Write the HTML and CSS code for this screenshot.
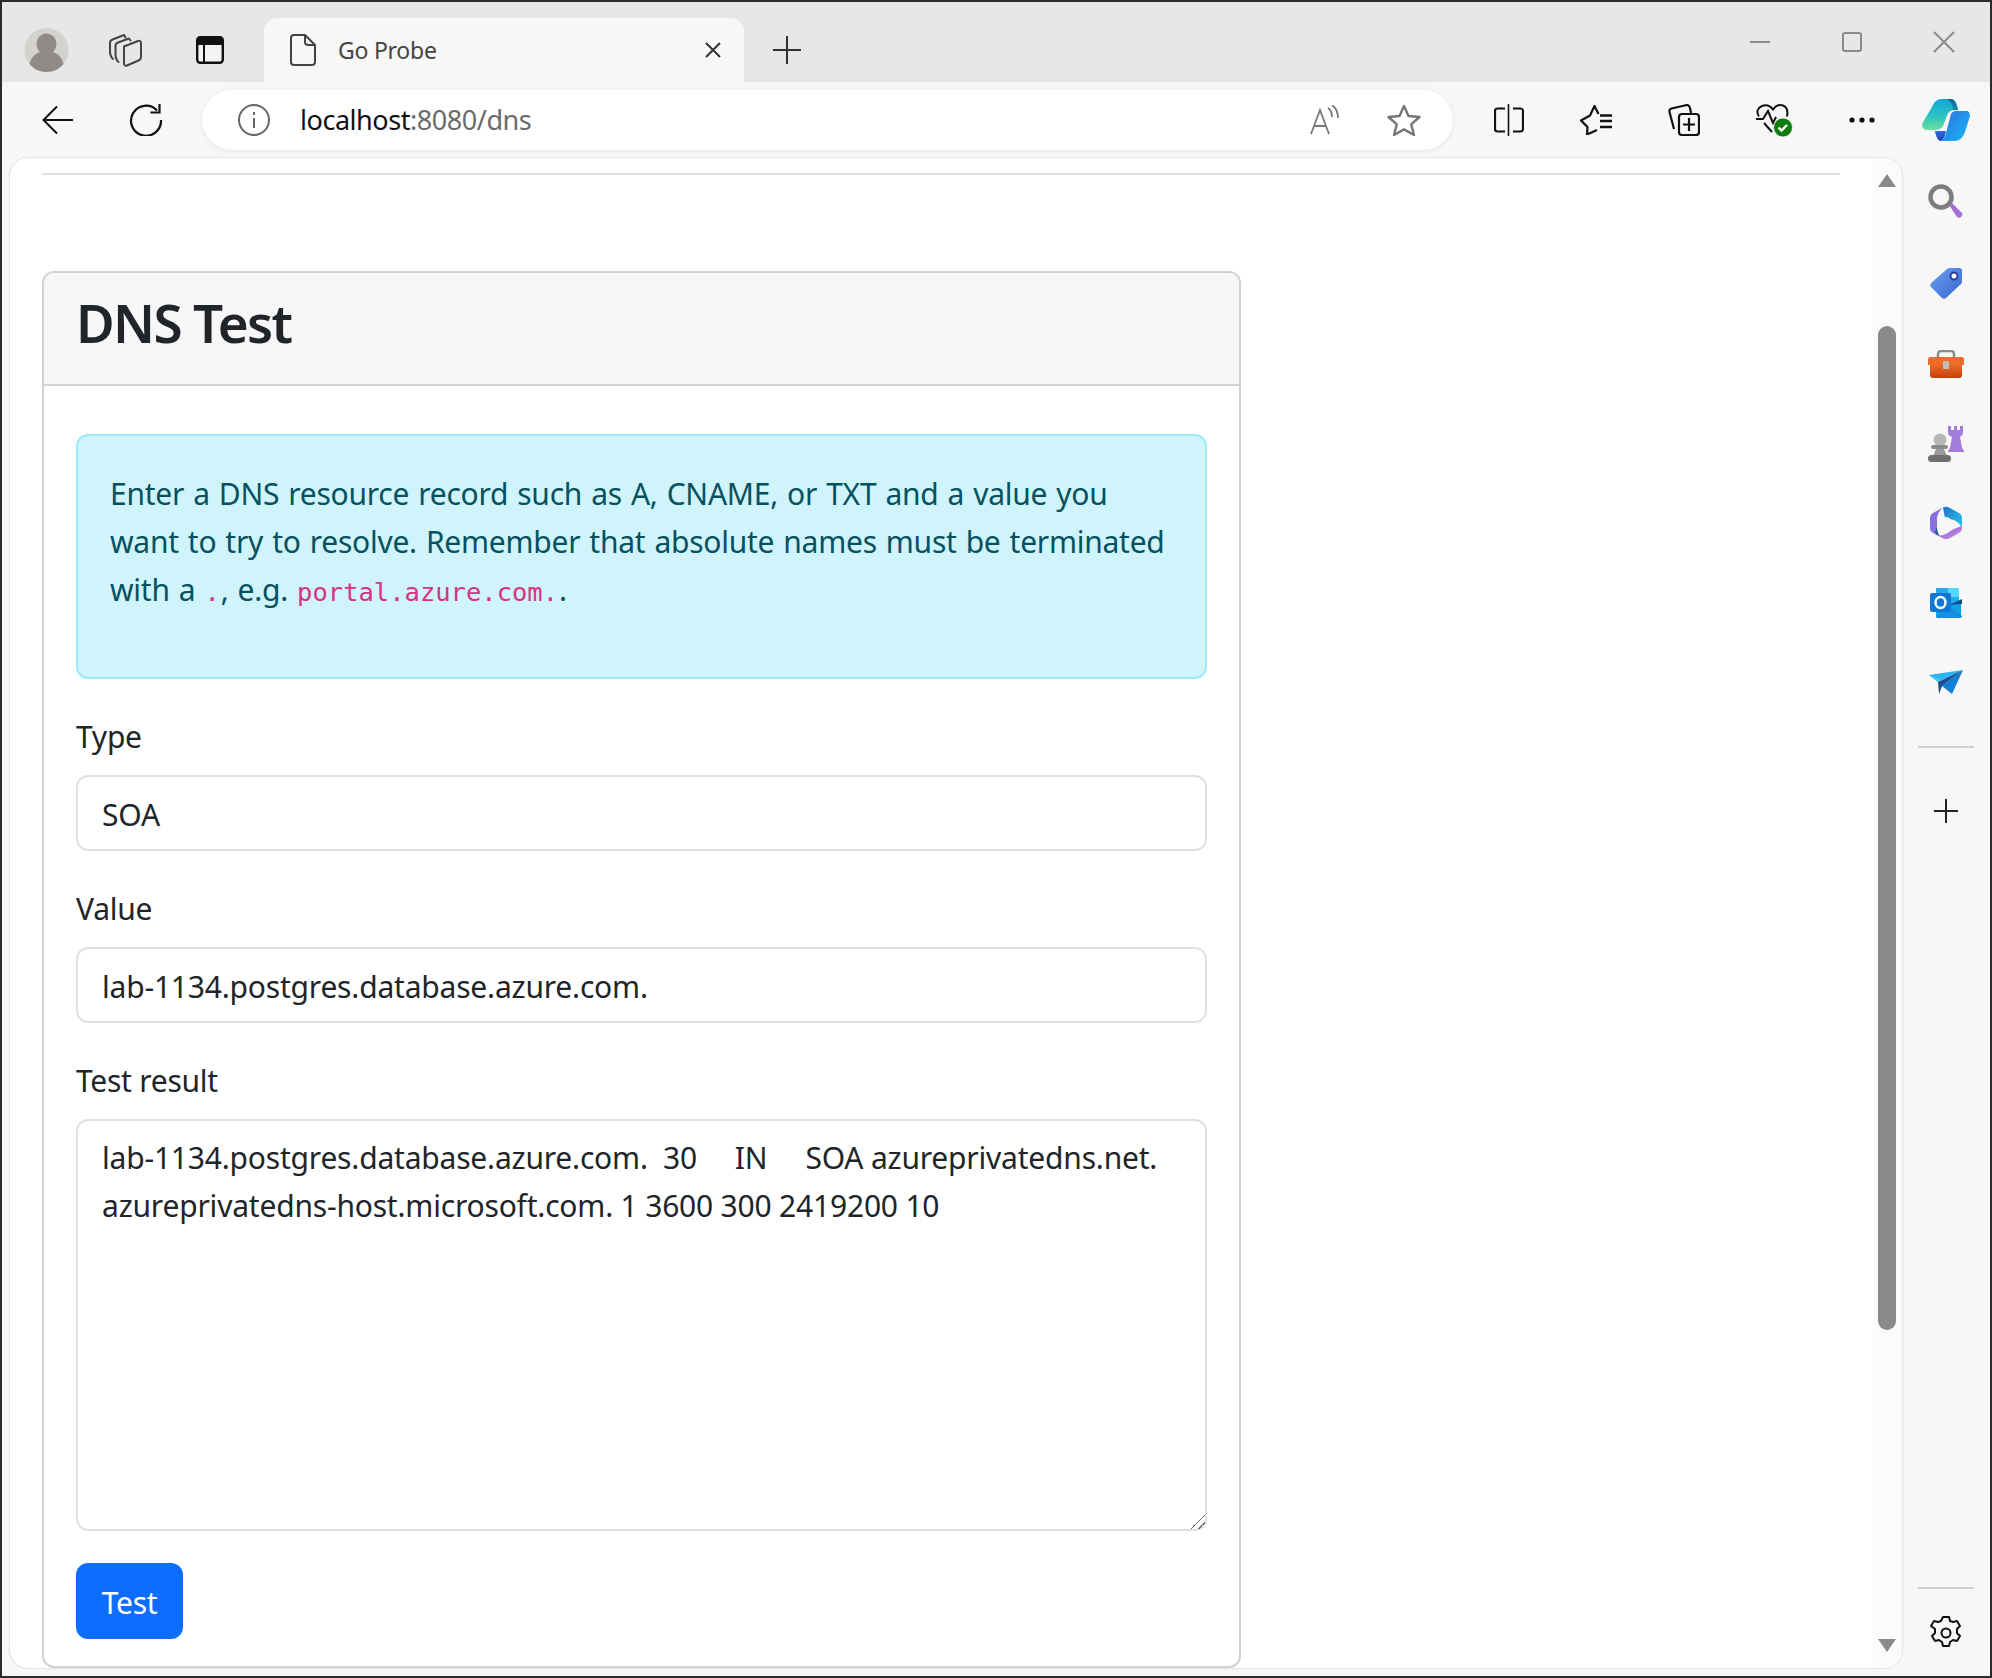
FILE: index.html
```html
<!DOCTYPE html>
<html lang="en">
<head>
<meta charset="utf-8">
<title>Go Probe</title>
<link rel="stylesheet" href="styles.css">
</head>
<body>
<div class="window">
  <header class="tabstrip">
    <span class="strip-btn avatar-btn">
      <svg width="45" height="46" viewBox="0 0 44 46"><circle cx="22" cy="23" r="22" fill="#d3d2ce"/><ellipse cx="22" cy="17" rx="10" ry="10.5" fill="#8f8b86"/><path d="M5 37c2-9 9-13 17-13s15 4 17 13c-4 5-10 8-17 8S9 42 5 37z" fill="#8f8b86"/></svg>
    </span>
    <span class="strip-btn workspaces-btn">
      <svg width="33" height="33" viewBox="0 0 33 33" fill="none" stroke="#444" stroke-width="2" stroke-linejoin="round" stroke-linecap="round"><path d="M4 25C1.500 23 1 21 1 17V9c0-2 1-3 2.500-3.500L15 1l1.500 2.500"/><path d="M9.500 28C7 26 6.500 24 6.500 20v-8c0-2 1-3 2.500-3.500L20 4.500l1.500 2"/><path d="M15 12.500 29 7c2-.5 3 .5 3 2v14c0 2-1 3-2.500 3.500L18 31.500c-2 .5-3-.5-3-2z"/></svg>
    </span>
    <span class="strip-btn tabs-btn">
      <svg width="28" height="28" viewBox="0 0 28 28"><rect x="1.200" y="1.200" width="25.600" height="25.600" rx="3" fill="#f4f4f4" stroke="#111" stroke-width="2.400"/><path d="M1 4a3 3 0 0 1 3-3h20a3 3 0 0 1 3 3v5H1z" fill="#111"/><path d="M8 9v18" stroke="#111" stroke-width="2"/></svg>
    </span>
    <div class="tab">
      <svg class="tab-icon" width="26" height="32" viewBox="0 0 26 32" fill="none" stroke="#444" stroke-width="2" stroke-linejoin="round"><path d="M4 1h11l10 10v17c0 2-1 3-3 3H4c-2 0-3-1-3-3V4c0-2 1-3 3-3z"/><path d="M15 1v7c0 2 1 3 3 3h7"/></svg>
      <span class="tab-title">Go Probe</span>
      <svg class="tab-close" width="18" height="18" viewBox="0 0 18 18" stroke="#333" stroke-width="2"><path d="M2 2l14 14M16 2 2 16"/></svg>
    </div>
    <svg class="new-tab" width="30" height="30" viewBox="0 0 30 30" stroke="#333" stroke-width="2"><path d="M15 1v28M1 15h28"/></svg>
    <div class="window-controls">
      <svg width="22" height="22" viewBox="0 0 22 22" stroke="#8a8a8a" stroke-width="2"><path d="M1 11h20"/></svg>
      <svg width="20" height="20" viewBox="0 0 20 20" fill="none" stroke="#8a8a8a" stroke-width="2"><rect x="1" y="1" width="18" height="18" rx="2"/></svg>
      <svg width="22" height="22" viewBox="0 0 22 22" stroke="#8a8a8a" stroke-width="2"><path d="M1 1l20 20M21 1 1 21"/></svg>
    </div>
  </header>

  <nav class="toolbar">
    <svg class="back" width="32" height="30" viewBox="0 0 32 30" fill="none" stroke="#111" stroke-width="2"><path d="M31 15H2M15 1.500 1.500 15 15 28.500"/></svg>
    <svg class="reload" width="34" height="32" viewBox="0 0 34 32" fill="none" stroke="#111" stroke-width="2.200"><path d="M28 6.500a15 15 0 1 0 4 9.500"/><path d="M30.500 0v8.500h-9"/></svg>
    <div class="address">
      <svg class="info" width="32" height="32" viewBox="0 0 32 32" fill="none" stroke="#666" stroke-width="2"><circle cx="16" cy="16" r="15"/><path d="M16 14v10M16 8v3"/></svg>
      <span class="url"><span class="url-host">localhost</span>:8080/dns</span>
      <svg class="read" width="32" height="30" viewBox="0 0 32 30" fill="none" stroke="#777" stroke-width="1.800"><path d="M2 29 11 5l9 24M5 21h12"/><path d="M19 3c3 2 4 5 4 9M23 0c4 3 6 8 6 13"/></svg>
      <svg class="star" width="34" height="32" viewBox="0 0 34 32" fill="none" stroke="#777" stroke-width="2.400" stroke-linejoin="round"><path d="M17 2l4.500 10 11 1-8.300 7.300L27 31l-10-5.600L7 31l2.800-10.700L1.500 13l11-1z"/></svg>
    </div>
    <div class="tool-icons">
      <svg width="30" height="32" viewBox="0 0 30 32" fill="none" stroke="#111" stroke-width="2.200"><path d="M11 4.500H3.500C2 4.500 1 5.500 1 7v18c0 1.500 1 2.500 2.500 2.500H11M19 4.500h7.500C28 4.500 29 5.500 29 7v18c0 1.500-1 2.500-2.500 2.500H19"/><path d="M14.500 0v32" stroke-width="1.600"/></svg>
      <svg width="32" height="30" viewBox="0 0 32 30" fill="none" stroke="#111" stroke-width="2.200" stroke-linejoin="round"><path d="M17 25 7 29.500 7.500 22 1 15.500 10 10.500 14.500 1 18.500 9"/><path d="M20 10.500h12M20 16h12M20 22h12" stroke-width="2.400"/></svg>
      <svg width="32" height="32" viewBox="0 0 32 32" fill="none" stroke="#111" stroke-width="2.200" stroke-linejoin="round"><path d="M6 25 1.500 8c-.5-2 .5-3 2-3.500L19 1c1.500 0 2.500 1 3 3l1 5"/><rect x="11" y="10" width="20" height="21" rx="3"/><path d="M21 14v13M15 20.500h12"/></svg>
      <svg width="37" height="33" viewBox="0 0 37 33" fill="none" stroke="#111" stroke-width="2"><path d="M3 12.500C0 8 1.500 4 6 2c4-1.500 8-.5 11 3.500C20 1.500 24 .5 27 1.500c4 1.500 5 6 4 11"/><path d="M0 15h7l5-8 5 12 3-6"/><path d="M8 19l8 9"/><circle cx="27" cy="23.500" r="9.500" fill="#107c10" stroke="#f7f7f7" stroke-width=".8"/><path d="M22.500 23.500l3 3 5.500-5.500" stroke="#fff" stroke-width="2.400"/></svg>
      <svg class="dots" width="26" height="6" viewBox="0 0 26 6" fill="#111"><circle cx="3" cy="3" r="2.600"/><circle cx="13" cy="3" r="2.600"/><circle cx="23" cy="3" r="2.600"/></svg>
    </div>
    <svg class="copilot" width="48" height="42" viewBox="0 0 48 42">
      <defs>
        <linearGradient id="cpA" x1="0" y1="0" x2="0" y2="1"><stop offset="0" stop-color="#0ea7d8"/><stop offset=".55" stop-color="#2cc3c0"/><stop offset="1" stop-color="#6ee09c"/></linearGradient>
        <linearGradient id="cpB" x1="0" y1="0" x2="1" y2="1"><stop offset="0" stop-color="#2f6fdc"/><stop offset="1" stop-color="#14b8fa"/></linearGradient>
        <linearGradient id="cpC" x1="0" y1="0" x2="1" y2="1"><stop offset="0" stop-color="#0d5a8c"/><stop offset="1" stop-color="#1b8cba"/></linearGradient>
        <linearGradient id="cpD" x1="0" y1="0" x2="0" y2="1"><stop offset="0" stop-color="#2f6fe0"/><stop offset="1" stop-color="#1e3fc0"/></linearGradient>
      </defs>
      <path d="M10 8C12 3 15 0 20 0h9c4 0 6 5 7 11h-3c-4 0-7 2-8 6l-4 10c-2 3-5 4-8 4H4c-3 0-4.500-3-3.500-7z" fill="url(#cpA)"/>
      <path d="M25 0h4c4 0 6 5 7 11h-5c0-5-2-9-6-11z" fill="url(#cpC)"/>
      <path d="M29 15c1-2 3-3 5-3h10c3 0 4 2 4 5l-5 16c-2 5-5 9-10 9H19c2-1 4-4 5-8z" fill="url(#cpB)"/>
      <path d="M13 32h11c-1 6-3 9-5 10-3 0-5-4-6-10z" fill="url(#cpD)"/>
    </svg>
  </nav>

  <div class="main">
    <div class="viewport">
      <div class="page">
        <hr class="rule">
        <section class="card">
          <h3 class="card-header">DNS Test</h3>
          <div class="card-body">
            <div class="alert">
              <p>Enter a DNS resource record such as A, CNAME, or TXT and a value you want to try to resolve. Remember that absolute names must be terminated with a <code>.</code>, e.g. <code>portal.azure.com.</code>.</p>
            </div>
            <div class="field">
              <label class="label" for="type">Type</label>
              <input class="control" id="type" value="SOA">
            </div>
            <div class="field">
              <label class="label" for="value">Value</label>
              <input class="control" id="value" value="lab-1134.postgres.database.azure.com.">
            </div>
            <div class="field">
              <label class="label" for="result">Test result</label>
              <textarea class="control result" id="result">lab-1134.postgres.database.azure.com.  30     IN     SOA azureprivatedns.net. azureprivatedns-host.microsoft.com. 1 3600 300 2419200 10</textarea>
            </div>
            <button class="btn" type="button">Test</button>
          </div>
        </section>
      </div>
      <div class="scrollbar">
        <span class="arrow-up"></span>
        <span class="thumb"></span>
        <span class="arrow-down"></span>
      </div>
    </div>

    <aside class="sidebar">
      <svg width="36" height="36" viewBox="0 0 36 36"><circle cx="13" cy="13" r="10.500" fill="none" stroke="#7d7d7d" stroke-width="4.500"/><path d="M21 21l3-2 10 10c1 1 0 3-1 4s-3 1-4 0z" fill="#a56fd6"/></svg>
      <svg width="34" height="34" viewBox="0 0 34 34">
        <defs><linearGradient id="tagG" x1="0" y1="0" x2="1" y2="1"><stop offset="0" stop-color="#6aa3f0"/><stop offset="1" stop-color="#3a62d0"/></linearGradient></defs>
        <path d="M21 1h9c2 0 3 1 3 3v10c0 1 0 2-1 3L17 31c-1 1-3 1-4 0L2 20c-1-1-1-3 0-4L18 2c1-1 2-1 3-1z" fill="url(#tagG)"/><circle cx="25" cy="9" r="3.500" fill="#fff" stroke="#2b3e9c" stroke-width="2"/>
      </svg>
      <svg width="36" height="28" viewBox="0 0 36 28">
        <defs><linearGradient id="boxG" x1="0" y1="0" x2="0" y2="1"><stop offset="0" stop-color="#ea6a28"/><stop offset="1" stop-color="#c8400a"/></linearGradient></defs>
        <path d="M10 8V4c0-2 1-3 3-3h10c2 0 3 1 3 3v4" fill="none" stroke="#8c8c8c" stroke-width="2.500"/><path d="M2 7h32c1 0 2 1 2 2v6H0V9c0-1 1-2 2-2z" fill="#ec6c2a"/><path d="M2 15h32v10c0 2-1 3-3 3H5c-2 0-3-1-3-3z" fill="url(#boxG)"/><rect x="15" y="11" width="6" height="8" rx="1" fill="#bfbfbf"/>
      </svg>
      <svg width="36" height="36" viewBox="0 0 36 36">
        <path d="M20 0h3v4h3V0h3v4h3V0h3v7c0 2-2 3-3 4l2 11c1 1 2 2 2 4H20c0-2 1-3 2-4l2-11c-2-1-4-2-4-4z" fill="#a07ddb"/>
        <circle cx="12" cy="14" r="6.500" fill="#b8b8b8"/><rect x="3" y="19" width="17" height="4" rx="2" fill="#8a8a8a"/><path d="M8 23h8l3 7H5z" fill="#9a9a9a"/><rect x="0" y="29" width="23" height="7" rx="3.500" fill="#6f6f6f"/>
      </svg>
      <svg width="32" height="34" viewBox="0 0 32 34">
        <defs><linearGradient id="m3A" x1="0" y1="0" x2="1" y2="1"><stop offset="0" stop-color="#1f6fc8"/><stop offset="1" stop-color="#27d0ef"/></linearGradient><linearGradient id="m3B" x1="0" y1="0" x2="1" y2="1"><stop offset="0" stop-color="#7c63d9"/><stop offset="1" stop-color="#d68ce0"/></linearGradient></defs>
        <path d="M13 1.500c2-1 4-1 6 0l10 5.500c2 1 3 3 3 5v11c-1-4-4-7-8-9l-9-2z" fill="url(#m3A)"/>
        <path d="M13 1.500 3 7c-2 1-3 3-3 5v10c0 2 1 4 3 5l5 3c-1-2-1-5-1-8V13c0-4 3-9 6-11.500z" fill="#8b6fe0"/>
        <path d="M32 20v2c0 2-1 4-3 5l-10 5.500c-2 1-4 1-6 0l-6-3.500c4 1 8 0 12-3 3-2 6-4 13-6z" fill="url(#m3B)"/>
        <path d="M7 21c0 4 1 7 3 9-2-1-4-2-5-4z" fill="#1c4f9c"/>
        <circle cx="16" cy="17" r="6" fill="#f7f7f7"/>
      </svg>
      <svg width="32" height="32" viewBox="0 0 32 32">
        <path d="M6 1h21c1 0 2 1 2 2v13H6z" fill="#28a8ea"/><path d="M18 1h9c1 0 2 1 2 2v7H18z" fill="#50d9ff"/>
        <path d="M6 16h25v13c0 1-1 2-2 2H8c-1 0-2-1-2-2z" fill="#14a0e6"/><path d="M6 29l13-11 13 11c0 1-1 2-2 2H8c-1 0-2-1-2-2z" fill="#1490df"/><path d="M19 18l13-6v5z" fill="#0a4f85"/>
        <rect x="0" y="6" width="21" height="19" rx="2" fill="#0f78d4"/><ellipse cx="10.500" cy="15.500" rx="5" ry="5.500" fill="none" stroke="#fff" stroke-width="2.400"/>
      </svg>
      <svg width="34" height="26" viewBox="0 0 34 26">
        <path d="M0 5 34 0 9 12z" fill="#29b6f0"/><path d="M34 0 23 24 13 16z" fill="#0f80d6"/><path d="M9 12 34 0 13 16l-3 8z" fill="#1d4d8f"/><path d="M0 5l9 7 3-3z" fill="#41c7f5"/>
      </svg>
      <span class="side-line"></span>
      <svg class="side-plus" width="24" height="24" viewBox="0 0 24 24" stroke="#222" stroke-width="2"><path d="M12 0v24M0 12h24"/></svg>
      <span class="side-spacer"></span>
      <span class="side-line bottom-line"></span>
      <svg class="gear" width="34" height="34" viewBox="0 0 34 34" fill="none" stroke="#111" stroke-width="2"><path d="M14 1h6l1 4 3 1 4-1 3 5-3 3v4l3 3-3 5-4-1-3 2-1 4h-6l-1-4-3-2-4 1-3-5 3-3v-4L2 10l3-5 4 1 3-1z" stroke-linejoin="round"/><circle cx="17" cy="17" r="4.500"/></svg>
    </aside>
  </div>
</div>
</body>
</html>
```
FILE: styles.css
```css
* { box-sizing: border-box; }
html, body { margin: 0; padding: 0; }
body {
  width: 1992px;
  height: 1678px;
  overflow: hidden;
  font-family: "Noto Sans", "Open Sans", sans-serif;
  color: #212529;
}
svg { display: block; flex: none; }

.window {
  height: 1678px;
  display: flex;
  flex-direction: column;
  border: 2px solid #2b2b2b;
  background: #f7f7f7;
}

/* tab strip */
.tabstrip {
  height: 80px;
  flex: none;
  display: flex;
  align-items: flex-end;
  background: #e7e7e7;
}
.strip-btn { height: 64px; display: flex; align-items: center; flex: none; }
.avatar-btn { margin-left: 22px; width: 85px; }
.workspaces-btn { width: 87px; }
.tabs-btn { width: 68px; }
.tab {
  width: 480px;
  height: 64px;
  flex: none;
  display: flex;
  align-items: center;
  background: #f7f7f7;
  border-radius: 14px 14px 0 0;
  padding-left: 26px;
}
.tab-title {
  margin-left: 22px;
  padding-bottom: 1px;
  font-size: 23px;
  letter-spacing: -.25px;
  color: #444;
  flex: 1;
}
.tab-close { margin-right: 22px; }
.new-tab { margin: 0 0 17px 28px; }
.window-controls {
  margin-left: auto;
  align-self: flex-start;
  margin-top: 29px;
  display: flex;
  align-items: center;
  gap: 71px;
  padding-right: 35px;
}

/* toolbar */
.toolbar {
  height: 76px;
  flex: none;
  display: flex;
  align-items: center;
}
.back { margin-left: 40px; }
.reload { margin-left: 55px; }
.address {
  margin-left: 39px;
  width: 1251px;
  height: 60px;
  background: #fff;
  border-radius: 30px;
  box-shadow: 0 1px 5px rgba(0,0,0,.08);
  display: flex;
  align-items: center;
  padding-left: 36px;
}
.url {
  margin-left: 30px;
  padding-bottom: 2px;
  font-size: 27px;
  letter-spacing: -.45px;
  color: #6b6b6b;
  flex: 1;
}
.url-host { color: #111; }
.read { margin-right: 46px; }
.star { margin-right: 32px; }
.tool-icons {
  margin-left: 41px;
  width: 381px;
  display: flex;
  align-items: center;
  justify-content: space-between;
}
.copilot { margin-left: 47px; }

/* content */
.main { flex: 1; display: flex; min-height: 0; }
.viewport {
  width: 1892px;
  margin: 0 0 8px 8px;
  background: #fff;
  border-radius: 18px;
  box-shadow: 0 0 2px rgba(0,0,0,.25);
  display: flex;
  overflow: hidden;
}
.page {
  flex: 1;
  min-width: 0;
  display: flex;
  flex-direction: column;
  padding: 15px 33px 0 32px;
}
.rule { margin: 0 0 96px; border: 0; height: 2px; background: #dee2e6; flex: none; }
.card {
  width: 1199px;
  flex: 1;
  border: 2px solid #d2d2d2;
  border-radius: 12px;
  overflow: hidden;
  display: flex;
  flex-direction: column;
}
.card-header {
  margin: 0;
  height: 113px;
  flex: none;
  padding: 12px 32px 0;
  background: #f7f7f7;
  border-bottom: 2px solid #d2d2d2;
  font-size: 53px;
  line-height: 76px;
  font-weight: 600;
  letter-spacing: -1.700px;
}
.card-body { padding: 48px 32px 0; }
.alert {
  background: #cff4fc;
  border: 2px solid #9eeaf9;
  border-radius: 12px;
  padding: 34px 32px 30px;
  color: #055160;
  font-size: 30px;
  line-height: 48px;
  letter-spacing: -.25px;
  word-spacing: 1.500px;
  margin-bottom: 32px;
  height: 245px;
}
.alert p { margin: 0; }
code {
  font-family: "DejaVu Sans Mono", "Liberation Mono", monospace;
  font-size: 25.500px;
  letter-spacing: 0;
  word-spacing: 0;
  margin-right: 1px;
  color: #d63384;
}
.field { margin-bottom: 32px; }
.label {
  display: block;
  font-size: 30px;
  line-height: 48px;
  letter-spacing: -.25px;
  padding-top: 2px;
  height: 50px;
  margin-bottom: 14px;
}
.control {
  display: block;
  width: 100%;
  height: 76px;
  padding: 13px 24px 11px;
  border: 2px solid #dee2e6;
  border-radius: 12px;
  background: #fff;
  color: #212529;
  font-family: inherit;
  font-size: 30px;
  line-height: 48px;
  letter-spacing: -.2px;
  outline: none;
}
.result { height: 412px; resize: vertical; }
.result::-webkit-resizer {
  background: linear-gradient(135deg, transparent 50%, #666 50%, #666 56%, transparent 56%, transparent 74%, #666 74%, #666 80%, transparent 80%);
}
.btn {
  display: block;
  width: 107px;
  height: 76px;
  padding: 3px 0 0;
  border: 0;
  border-radius: 12px;
  background: #0d6efd;
  color: #fff;
  font-family: inherit;
  font-size: 30px;
  letter-spacing: -.25px;
}

/* scrollbar */
.scrollbar {
  width: 29px;
  flex: none;
  background: #fbfbfb;
  display: flex;
  flex-direction: column;
  align-items: center;
  padding: 16px 6px 0 5px;
}
.arrow-up { border: 9px solid transparent; border-top: 0; border-bottom: 13px solid #8a8a8a; width: 0; height: 0; flex: none; }
.thumb { width: 18px; height: 1004px; margin-top: 139px; background: #8a8a8a; border-radius: 9px; flex: none; }
.arrow-down { margin-top: 309px; border: 9px solid transparent; border-bottom: 0; border-top: 13px solid #8a8a8a; width: 0; height: 0; flex: none; }

/* sidebar */
.sidebar {
  flex: 1;
  display: flex;
  flex-direction: column;
  align-items: center;
  padding: 26px 0 0;
}
.sidebar > svg:nth-child(1) { margin-bottom: 47px; }
.sidebar > svg:nth-child(2) { margin-bottom: 49px; }
.sidebar > svg:nth-child(3) { margin-bottom: 48px; }
.sidebar > svg:nth-child(4) { margin-bottom: 44px; }
.sidebar > svg:nth-child(5) { margin-bottom: 47px; }
.sidebar > svg:nth-child(6) { margin-bottom: 51px; }
.side-line { width: 56px; height: 2px; background: #d0d0d0; margin-top: 50px; flex: none; }
.side-plus { margin-top: 51px; }
.side-spacer { flex: 1; }
.bottom-line { margin-top: 0; }
.gear { margin: 27px 0 26px; }
```
